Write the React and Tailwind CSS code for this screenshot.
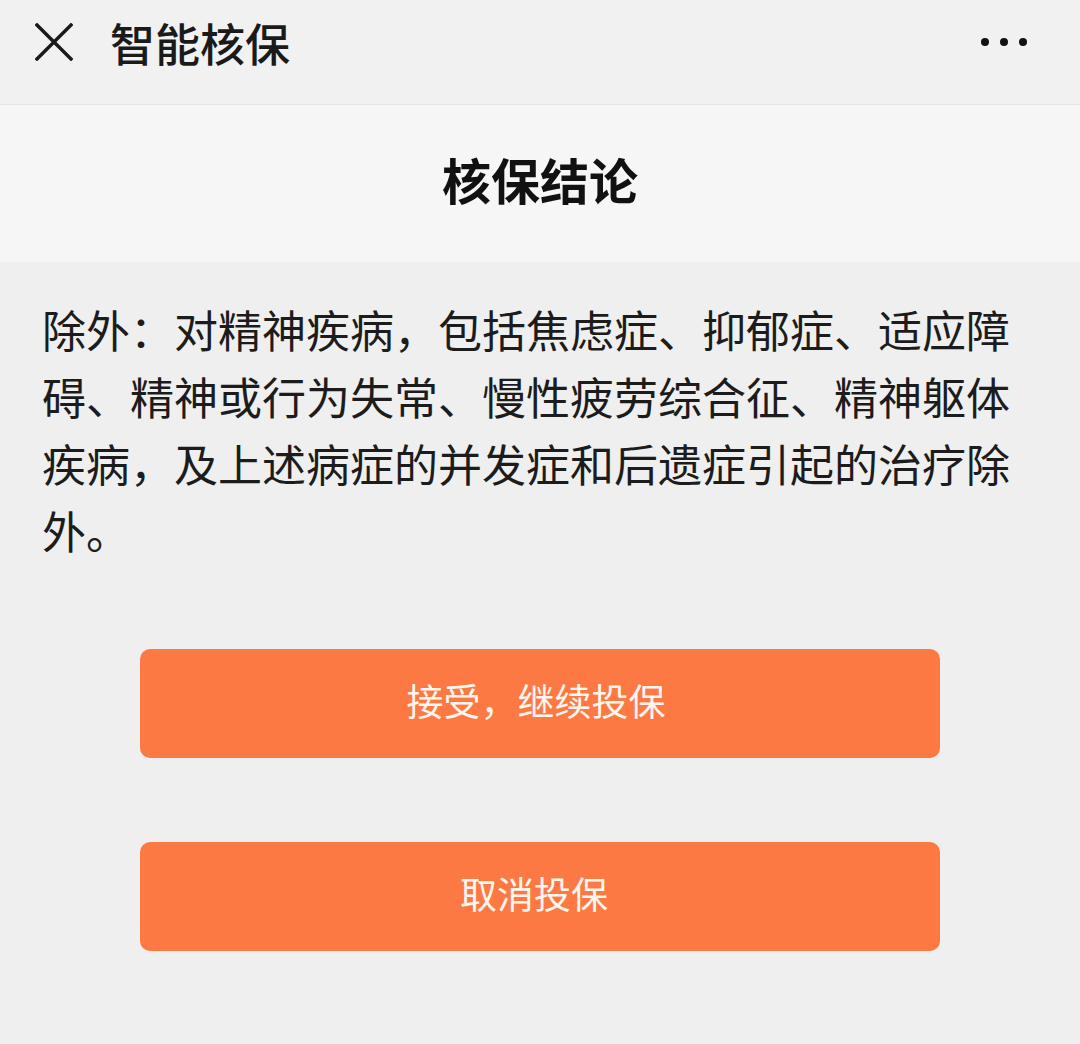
import React from "react"

const font = { fontFamily: '"Noto Sans CJK SC", "Noto Sans", sans-serif' }

function CloseIcon() {
  return (
    <svg width="38" height="38" viewBox="0 0 38 38" fill="none">
      <path d="M2 2 L36 36 M36 2 L2 36" stroke="#1a1a1a" strokeWidth="3.4" strokeLinecap="square" />
    </svg>
  )
}

function MoreIcon() {
  return (
    <svg width="48" height="10" viewBox="0 0 48 10">
      <circle cx="5" cy="5" r="4" fill="#111" />
      <circle cx="24" cy="5" r="4" fill="#111" />
      <circle cx="43" cy="5" r="4" fill="#111" />
    </svg>
  )
}

export default function App() {
  const exclusion =
    "除外：对精神疾病，包括焦虑症、抑郁症、适应障碍、精神或行为失常、慢性疲劳综合征、精神躯体疾病，及上述病症的并发症和后遗症引起的治疗除外。"

  return (
    <div className="w-[1080px] h-[1044px] bg-[#efefef] flex flex-col" style={font}>
      {/* top bar */}
      <div className="h-[105px] bg-[#f1f1f1] border-b border-[#e6e6e6] flex items-start shrink-0">
        <div className="flex items-center h-[84px] w-full pl-[35px] pr-[52px]">
          <CloseIcon />
          <span className="ml-[37px] text-[45px] font-medium text-[#1a1a1a] leading-none">智能核保</span>
          <div className="ml-auto">
            <MoreIcon />
          </div>
        </div>
      </div>

      {/* section header */}
      <div className="h-[157px] bg-[#f6f6f6] flex items-center justify-center shrink-0">
        <h1 className="text-[49px] font-bold text-[#111] leading-none mb-[10px]">核保结论</h1>
      </div>

      <p className="px-[42px] pt-[34px] text-[44px] leading-[67px] text-[#1c1c1c]">{exclusion}</p>

      <div className="flex flex-col items-center gap-[84px] mt-[85px]">
        <button className="w-[800px] h-[109px] rounded-[10px] bg-[#fd7944] text-[#fff6ee] text-[37px] leading-none pb-[7px] pr-[8px]">
          接受，继续投保
        </button>
        <button className="w-[800px] h-[109px] rounded-[10px] bg-[#fd7944] text-[#fff6ee] text-[37px] leading-none pb-[7px] pr-[12px]">
          取消投保
        </button>
      </div>
    </div>
  )
}
